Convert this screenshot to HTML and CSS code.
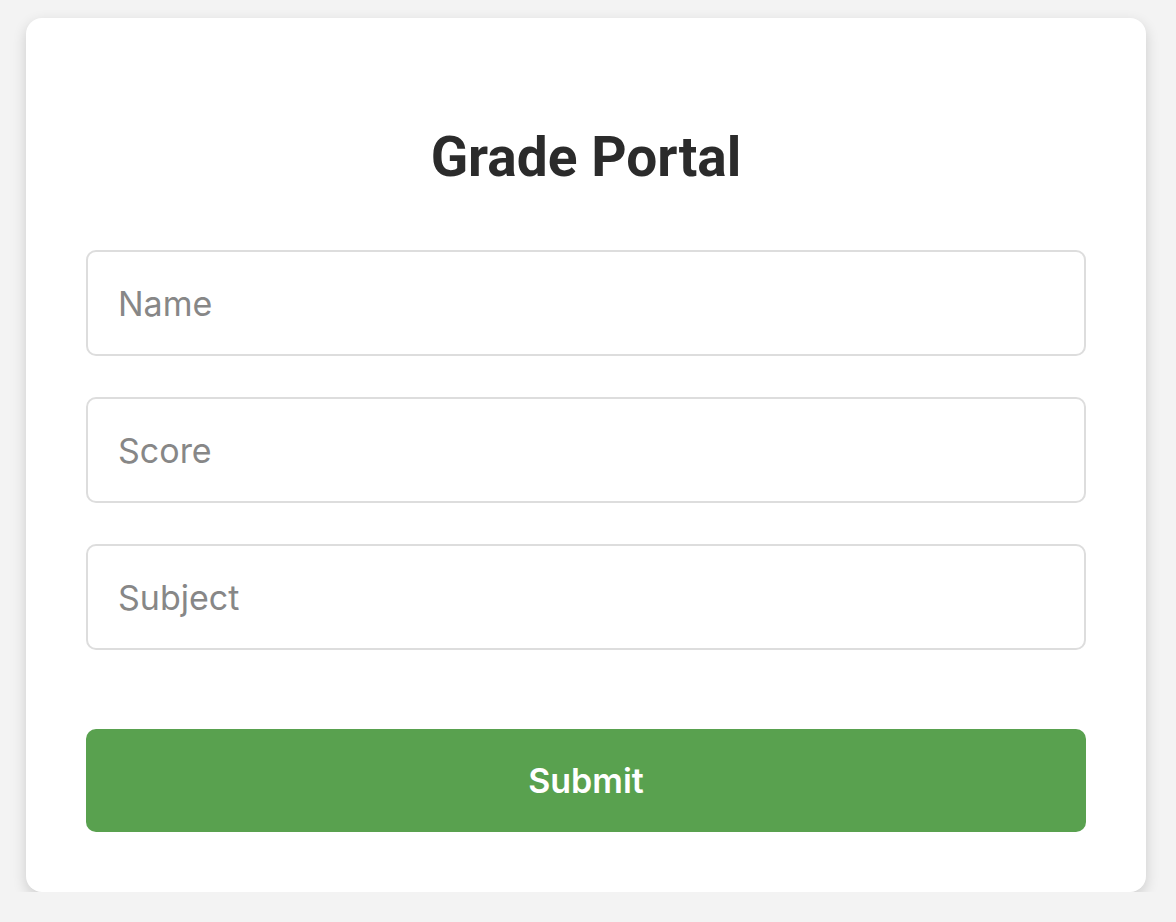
FILE: index.html
```html
<!DOCTYPE html>
<html lang="en">
<head>
<meta charset="utf-8">
<title>Grade Portal</title>
<link rel="stylesheet" href="styles.css">
</head>
<body>
<main class="card">
  <h1 class="title">Grade Portal</h1>
  <form class="form">
    <input class="field" type="text" placeholder="Name">
    <input class="field" type="text" placeholder="Score">
    <input class="field" type="text" placeholder="Subject">
    <button class="submit" type="button">Submit</button>
  </form>
</main>
</body>
</html>
```

FILE: styles.css
```css
html, body {
  margin: 0;
  padding: 0;
}
body {
  background: #f3f3f3;
  font-family: Inter, "Noto Sans", sans-serif;
}
.card {
  box-sizing: border-box;
  width: 1120px;
  margin: 18px 0 0 26px;
  padding: 60px 60px 60px;
  background: #ffffff;
  border-radius: 16px;
  box-shadow: 0 5px 14px rgba(0, 0, 0, 0.16);
}
.title {
  margin: 46px 0 60px;
  font-family: Roboto, "Liberation Sans", sans-serif;
  font-weight: 700;
  font-size: 55px;
  line-height: 66px;
  color: #2b2b2b;
  text-align: center;
}
.form {
  display: flex;
  flex-direction: column;
  gap: 41px;
}
.field {
  box-sizing: border-box;
  height: 106px;
  min-height: 106px;
  width: 100%;
  padding: 0 30px;
  border: 2px solid #dddddd;
  border-radius: 10px;
  font-family: Inter, "Noto Sans", sans-serif;
  font-size: 34px;
  color: #333;
  background: #fff;
  outline: none;
}
.field::placeholder {
  color: #878787;
}
.submit {
  margin-top: 38px;
  height: 103px;
  width: 100%;
  border: none;
  border-radius: 10px;
  background: #59a14f;
  color: #ffffff;
  font-family: Inter, "Noto Sans", sans-serif;
  font-weight: 600;
  font-size: 34px;
  cursor: pointer;
}
```
